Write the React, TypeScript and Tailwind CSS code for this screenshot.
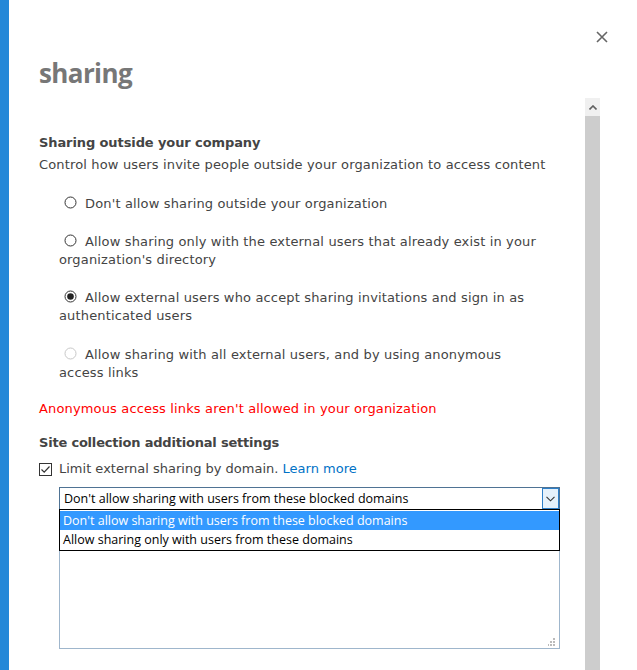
import React from "react";

function Radio({ checked, disabled }: { checked?: boolean; disabled?: boolean }) {
  const stroke = disabled ? "#c8c8c8" : "#333";
  return (
    <svg width="13" height="13" viewBox="0 0 13 13" className="inline-block align-[-1px] mr-[8px]">
      <circle cx="6.5" cy="6.5" r="5.5" fill="#fff" stroke={stroke} strokeWidth="1" />
      {checked && <circle cx="6.5" cy="6.5" r="3.3" fill="#222" />}
    </svg>
  );
}

export default function App() {
  const body = "font-['DejaVu_Sans',Verdana,sans-serif] text-[13px] tracking-[0.15px] leading-[18px] text-[#444]";
  return (
    <div className="flex h-[670px] w-[637px] overflow-hidden bg-white">
      <div className="w-[9px] shrink-0 bg-[#2488d8]" />
      <div className="relative flex flex-1 flex-col">
        <button className="absolute right-[29px] top-[31px] h-[12px] w-[12px]" aria-label="close">
          <svg width="12" height="12" viewBox="0 0 12 12">
            <path d="M1 1 L11 11 M11 1 L1 11" stroke="#666" strokeWidth="1.6" />
          </svg>
        </button>
        <div className="pl-[30px] pt-[57px] font-['Open_Sans',sans-serif] text-[26px] font-bold leading-[32px] tracking-[-0.6px] text-[#777]">
          sharing
        </div>
        <div className="mt-[9px] flex h-[572px]">
          <div className={`w-[576px] shrink-0 pl-[30px] pt-[36px] ${body}`}>
            <div className="font-bold tracking-[-0.1px]">Sharing outside your company</div>
            <div className="mt-[4px]">Control how users invite people outside your organization to access content</div>
            <div className="mt-[21px] pl-[25px] pr-[10px]">
              <Radio />Don't allow sharing outside your organization
            </div>
            <div className="mt-[20px] pl-[20px] pr-[10px]">
              <span className="ml-[5px]" />
              <Radio />Allow sharing only with the external users that already exist in your organization's directory
            </div>
            <div className="mt-[20px] pl-[20px] pr-[10px]">
              <span className="ml-[5px]" />
              <Radio checked />Allow external users who accept sharing invitations and sign in as authenticated users
            </div>
            <div className="mt-[21px] pl-[20px] pr-[40px]">
              <span className="ml-[5px]" />
              <Radio disabled />Allow sharing with all external users, and by using anonymous access links
            </div>
            <div className="mt-[18px] text-[#ff0000]">Anonymous access links aren't allowed in your organization</div>
            <div className="mt-[16px] font-bold tracking-[-0.2px]">Site collection additional settings</div>
            <div className="mt-[8px] flex items-center">
              <svg width="13" height="13" viewBox="0 0 13 13" className="mr-[7px] shrink-0">
                <rect x="0.5" y="0.5" width="12" height="12" fill="#fff" stroke="#333" />
                <path d="M2.5 6.5 L5.2 9.2 L10.5 3.5" fill="none" stroke="#333" strokeWidth="1.2" />
              </svg>
              <span className="tracking-[0px]">
                Limit external sharing by domain. <span className="text-[#0072c6]">Learn more</span>
              </span>
            </div>
            <div className="relative ml-[20px] mt-[9px] w-[501px] font-['Open_Sans',sans-serif] text-[12.5px] tracking-normal text-black">
              <div className="flex h-[23px] items-center border border-[#4f7394] bg-white pl-[4px]">
                <span className="flex-1">Don't allow sharing with users from these blocked domains</span>
                <span className="flex h-[21px] w-[17px] items-center justify-center border border-[#2e7fc8] bg-[#e5f1fb]">
                  <svg width="9" height="6" viewBox="0 0 9 6">
                    <path d="M0.5 0.8 L4.5 4.8 L8.5 0.8" fill="none" stroke="#333" strokeWidth="1.1" />
                  </svg>
                </span>
              </div>
              <div className="relative mt-[5px] h-[134px] border border-[#9fb6cc] bg-white">
                <svg width="8" height="8" viewBox="0 0 8 8" className="absolute bottom-[2px] right-[3px]">
                  <rect x="5" y="0" width="2" height="2" fill="#bbb" />
                  <rect x="5" y="3" width="2" height="2" fill="#bbb" />
                  <rect x="2" y="3" width="2" height="2" fill="#bbb" />
                  <rect x="5" y="6" width="2" height="2" fill="#bbb" />
                  <rect x="2" y="6" width="2" height="2" fill="#bbb" />
                  <rect x="-1" y="6" width="2" height="2" fill="#bbb" />
                </svg>
              </div>
              <div className="absolute left-0 top-[22px] w-[501px] border border-black bg-white py-[1px]">
                <div className="h-[19px] bg-[#3399ff] pl-[3px] leading-[19px] text-white">
                  Don't allow sharing with users from these blocked domains
                </div>
                <div className="h-[19px] pl-[3px] leading-[19px]">Allow sharing only with users from these domains</div>
              </div>
            </div>
          </div>
          <div className="flex w-[15px] shrink-0 flex-col">
            <div className="flex h-[18px] items-center justify-center bg-[#f0f0f0]">
              <svg width="8" height="5" viewBox="0 0 8 5">
                <path d="M0.5 4.5 L4 1 L7.5 4.5" fill="none" stroke="#606060" strokeWidth="1.6" />
              </svg>
            </div>
            <div className="flex-1 bg-[#cdcdcd]" />
          </div>
        </div>
      </div>
    </div>
  );
}
